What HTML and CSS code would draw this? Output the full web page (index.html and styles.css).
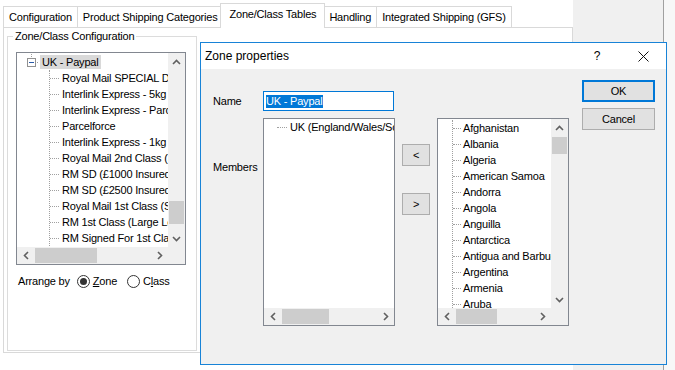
FILE: index.html
```html
<!DOCTYPE html>
<html lang="en">
<head>
  <meta charset="UTF-8">
  <title>Zone properties</title>
  <link rel="stylesheet" href="styles.css">
</head>
<body>
  <div class="app">
    <div class="tabctl">
      <div class="tabs">
        <div class="tab">Configuration</div>
        <div class="tab">Product Shipping Categories</div>
        <div class="tab active">Zone/Class Tables</div>
        <div class="tab">Handling</div>
        <div class="tab">Integrated Shipping (GFS)</div>
      </div>
      <div class="panel">
        <fieldset class="group">
          <legend>Zone/Class Configuration</legend>
          <div class="tree">
            <div class="tree-view">
              <div class="root">
                <svg width="13" height="16" viewBox="0 0 13 16">
                  <path d="M4.5 0v4" stroke="#a0a0a0" stroke-dasharray="1 1"/>
                  <rect x="0.5" y="4.5" width="8" height="8" fill="#fff" stroke="#919191"/>
                  <path d="M2 8.5h5" stroke="#2a5aa8"/>
                  <path d="M10 8.5h1" stroke="#a0a0a0"/>
                </svg>
                <span class="sel">UK - Paypal</span>
              </div>
              <div class="children">
                <div class="item">Royal Mail SPECIAL DELIVERY</div>
                <div class="item">Interlink Express - 5kg</div>
                <div class="item">Interlink Express - Parcel</div>
                <div class="item">Parcelforce</div>
                <div class="item">Interlink Express - 1kg</div>
                <div class="item">Royal Mail 2nd Class (Small)</div>
                <div class="item">RM SD (£1000 Insured)</div>
                <div class="item">RM SD (£2500 Insured)</div>
                <div class="item">Royal Mail 1st Class (Small)</div>
                <div class="item">RM 1st Class (Large Letter)</div>
                <div class="item">RM Signed For 1st Class</div>
              </div>
            </div>
            <div class="vscroll">
              <div class="sb-btn"><svg width="9" height="6" viewBox="0 0 9 6"><path d="M1 5l3.5-3.5L8 5" fill="none" stroke="#606060" stroke-width="1.6"/></svg></div>
              <div class="sb-track"><div class="thumb tree-vthumb"></div></div>
              <div class="sb-btn"><svg width="9" height="6" viewBox="0 0 9 6"><path d="M1 1l3.5 3.5L8 1" fill="none" stroke="#606060" stroke-width="1.6"/></svg></div>
            </div>
            <div class="hscroll">
              <div class="sb-btn"><svg width="6" height="9" viewBox="0 0 6 9"><path d="M5 1L1.5 4.5 5 8" fill="none" stroke="#606060" stroke-width="1.6"/></svg></div>
              <div class="sb-track"><div class="thumb tree-hthumb"></div></div>
              <div class="sb-btn"><svg width="6" height="9" viewBox="0 0 6 9"><path d="M1 1l3.5 3.5L1 8" fill="none" stroke="#606060" stroke-width="1.6"/></svg></div>
            </div>
            <div class="corner"></div>
          </div>
          <div class="arrange">
            <span>Arrange by</span>
            <span class="radio on"></span><span class="rlabel"><u>Z</u>one</span>
            <span class="radio"></span><span class="rlabel">C<u>l</u>ass</span>
          </div>
        </fieldset>
      </div>
    </div>
  </div>

  <div class="dialog">
    <div class="titlebar">
      <div class="title">Zone properties</div>
      <div class="tbtn">?</div>
      <div class="tbtn">
        <svg width="11" height="11" viewBox="0 0 11 11"><path d="M0.5 0.5l10 10M10.5 0.5l-10 10" stroke="#111" stroke-width="1"/></svg>
      </div>
    </div>
    <div class="dlg-client">
      <div class="dlg-main">
        <div class="dlg-label">Name</div>
        <div class="name-input"><span>UK - Paypal</span></div>
        <div></div>
        <div></div>

        <div class="dlg-label members">Members</div>
        <div class="list">
          <div class="list-body">
            <div class="member">UK (England/Wales/Scotland)</div>
          </div>
          <div class="hscroll">
            <div class="sb-btn"><svg width="6" height="9" viewBox="0 0 6 9"><path d="M5 1L1.5 4.5 5 8" fill="none" stroke="#606060" stroke-width="1.6"/></svg></div>
            <div class="sb-track"><div class="thumb members-hthumb"></div></div>
            <div class="sb-btn"><svg width="6" height="9" viewBox="0 0 6 9"><path d="M1 1l3.5 3.5L1 8" fill="none" stroke="#606060" stroke-width="1.6"/></svg></div>
          </div>
        </div>
        <div class="movers">
          <div class="mv">&lt;</div>
          <div class="mv">&gt;</div>
        </div>
        <div class="list countries">
          <div class="tree-view">
            <div class="children country-list">
              <div class="item">Afghanistan</div>
              <div class="item">Albania</div>
              <div class="item">Algeria</div>
              <div class="item">American Samoa</div>
              <div class="item">Andorra</div>
              <div class="item">Angola</div>
              <div class="item">Anguilla</div>
              <div class="item">Antarctica</div>
              <div class="item">Antigua and Barbuda</div>
              <div class="item">Argentina</div>
              <div class="item">Armenia</div>
              <div class="item">Aruba</div>
            </div>
          </div>
          <div class="vscroll">
            <div class="sb-btn"><svg width="9" height="6" viewBox="0 0 9 6"><path d="M1 5l3.5-3.5L8 5" fill="none" stroke="#606060" stroke-width="1.6"/></svg></div>
            <div class="sb-track"><div class="thumb country-vthumb"></div></div>
            <div class="sb-btn"><svg width="9" height="6" viewBox="0 0 9 6"><path d="M1 1l3.5 3.5L8 1" fill="none" stroke="#606060" stroke-width="1.6"/></svg></div>
          </div>
          <div class="hscroll">
            <div class="sb-btn"><svg width="6" height="9" viewBox="0 0 6 9"><path d="M5 1L1.5 4.5 5 8" fill="none" stroke="#606060" stroke-width="1.6"/></svg></div>
            <div class="sb-track"><div class="thumb country-hthumb"></div></div>
            <div class="sb-btn"><svg width="6" height="9" viewBox="0 0 6 9"><path d="M1 1l3.5 3.5L1 8" fill="none" stroke="#606060" stroke-width="1.6"/></svg></div>
          </div>
          <div class="corner"></div>
        </div>
      </div>
      <div class="dlg-buttons">
        <div class="btn default">OK</div>
        <div class="btn">Cancel</div>
      </div>
    </div>
  </div>
</body>
</html>
```

FILE: styles.css
```css
* {
  box-sizing: border-box;
}
body {
  margin: 0;
  background: #f7f7f7;
  font-family: "Liberation Sans", Arial, sans-serif;
  font-size: 11px;
  letter-spacing: -0.2px;
  color: #000;
}
.app {
  width: 664px;
  height: 370px;
  background: #f0f0f0;
  border-right: 1px solid #a0a0a0;
  display: flex;
}
.tabctl {
  width: 573px;
  height: 370px;
  background: #fff;
}

/* tab strip */
.tabs {
  display: flex;
  align-items: flex-end;
  height: 27px;
  padding-left: 3px;
}
.tab {
  height: 21px;
  line-height: 20px;
  padding: 0 5px;
  border: 1px solid #d9d9d9;
  border-bottom: none;
  margin-right: -1px;
  white-space: nowrap;
}
.tab.active {
  height: 25px;
  line-height: 21px;
  margin: 0 -2px -1px -2px;
  padding: 0 8px;
  background: #fff;
  position: relative;
  z-index: 1;
}
.panel {
  width: 570px;
  height: 326px;
  margin-left: 3px;
  border: 1px solid #d9d9d9;
  padding: 2px 3px;
}

/* group box */
.group {
  margin: 0;
  width: 190px;
  height: 321px;
  border: 1px solid #dcdcdc;
  padding: 0 8px;
}
.group legend {
  padding: 0 2px;
  margin-left: -3px;
  line-height: 13px;
}

/* tree view */
.tree {
  margin-top: 9px;
  width: 170px;
  height: 213px;
  border: 1px solid #828790;
  background: #fff;
  display: grid;
  grid-template-columns: 151px 17px;
  grid-template-rows: 194px 17px;
}
.tree-view {
  overflow: hidden;
  white-space: nowrap;
  padding-top: 1px;
}
.root {
  display: flex;
  align-items: center;
  height: 16px;
  padding-left: 10px;
}
.sel {
  background: #d9d9d9;
  padding: 0 2px;
  line-height: 14px;
}
.children {
  margin-left: 32px;
  border-left: 1px dotted #a0a0a0;
}
.item {
  display: flex;
  align-items: center;
  height: 16px;
}
.item::before {
  content: "";
  width: 9px;
  border-top: 1px dotted #a0a0a0;
  margin-right: 3px;
  flex: none;
}

/* scrollbars */
.vscroll {
  display: flex;
  flex-direction: column;
  background: #f0f0f0;
}
.hscroll {
  display: flex;
  background: #f0f0f0;
  height: 17px;
}
.sb-btn {
  width: 17px;
  height: 17px;
  flex: none;
  display: flex;
  align-items: center;
  justify-content: center;
}
.sb-track {
  flex: 1;
}
.thumb {
  background: #cdcdcd;
}
.tree-vthumb {
  margin: 131px 1px 0;
  height: 23px;
}
.tree-hthumb {
  margin: 1px 0 0 1px;
  width: 62px;
  height: 15px;
}
.corner {
  background: #f0f0f0;
}

/* arrange by */
.arrange {
  display: flex;
  align-items: center;
  margin: 10px 0 0 2px;
  line-height: 13px;
}
.radio {
  width: 13px;
  height: 13px;
  border: 1px solid #333;
  border-radius: 50%;
  background: #fff;
  display: flex;
  align-items: center;
  justify-content: center;
  margin-left: 7px;
}
.radio.on::after {
  content: "";
  width: 7px;
  height: 7px;
  border-radius: 50%;
  background: #333;
}
.rlabel {
  margin-left: 3px;
  margin-right: 3px;
}

/* dialog */
.dialog {
  position: absolute;
  left: 200px;
  top: 42px;
  width: 467px;
  height: 323px;
  border: 1px solid #1883d7;
  background: #f0f0f0;
  display: flex;
  flex-direction: column;
}
.titlebar {
  height: 26px;
  background: #fff;
  display: flex;
  align-items: center;
}
.title {
  flex: 1;
  padding-left: 4px;
  font-size: 12px;
  letter-spacing: 0;
}
.tbtn {
  width: 46px;
  height: 26px;
  display: flex;
  align-items: center;
  justify-content: center;
  font-size: 12px;
}
.dlg-client {
  flex: 1;
  display: flex;
  padding: 11px 11px 0 12px;
}
.dlg-main {
  display: grid;
  grid-template-columns: 50px 132px 42px 132px;
  grid-template-rows: 20px 208px;
  row-gap: 7px;
  margin-top: 11px;
}
.dlg-label {
  align-self: center;
  line-height: 13px;
}
.dlg-label.members {
  align-self: start;
  padding-top: 43px;
}
.name-input {
  width: 131px;
  border: 1px solid #0078d7;
  background: #fff;
  padding: 0 2px;
  display: flex;
  align-items: center;
}
.name-input span {
  background: #0078d7;
  color: #fff;
  line-height: 13px;
}
.list {
  border: 1px solid #828790;
  background: #fff;
  display: flex;
  flex-direction: column;
}
.list-body {
  flex: 1;
  overflow: hidden;
  white-space: nowrap;
}
.member {
  display: flex;
  align-items: center;
  height: 16px;
  padding-left: 13px;
}
.member::before {
  content: "";
  width: 10px;
  border-top: 1px dotted #a0a0a0;
  margin-right: 3px;
  flex: none;
}
.members-hthumb {
  margin: 1px 0 0 1px;
  width: 47px;
  height: 15px;
}
.list.countries {
  display: grid;
  grid-template-columns: 113px 17px;
  grid-template-rows: 189px 17px;
}
.country-list {
  margin-left: 14px;
}
.country-list .item::before {
  width: 8px;
  margin-right: 2px;
}
.country-vthumb {
  margin: 1px 1px 0;
  height: 17px;
}
.country-hthumb {
  margin: 1px 0 0 1px;
  width: 41px;
  height: 15px;
}
.movers {
  display: flex;
  flex-direction: column;
  align-items: center;
  padding-top: 26px;
  gap: 27px;
}
.mv {
  width: 28px;
  height: 22px;
  background: #e1e1e1;
  border: 1px solid #adadad;
  display: flex;
  align-items: center;
  justify-content: center;
}
.dlg-buttons {
  margin-left: 13px;
  display: flex;
  flex-direction: column;
  gap: 6px;
}
.btn {
  width: 73px;
  height: 22px;
  background: #e1e1e1;
  border: 1px solid #adadad;
  display: flex;
  align-items: center;
  justify-content: center;
}
.btn.default {
  border: 2px solid #0078d7;
}
```
